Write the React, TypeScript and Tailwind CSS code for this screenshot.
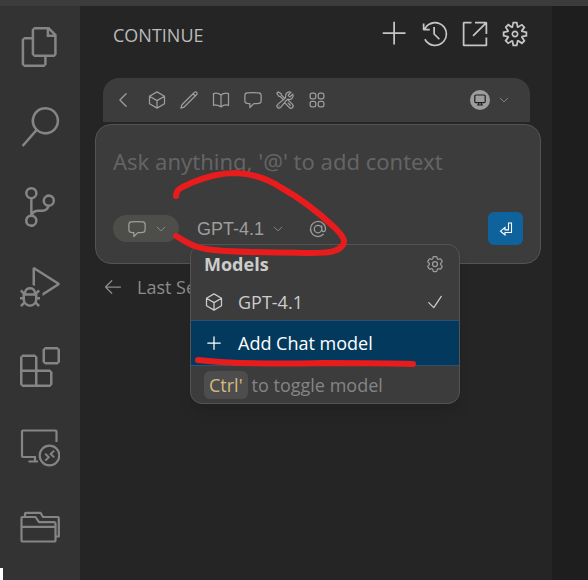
import type { ReactNode } from "react";
import {
  VscAdd,
  VscDebugAlt,
  VscGear,
  VscHistory,
  VscLinkExternal,
  VscSearch,
  VscSourceControl,
} from "react-icons/vsc";
import {
  HiOutlineArrowLeft,
  HiOutlineBookOpen,
  HiOutlineChatBubbleLeft,
  HiOutlineCheck,
  HiOutlineChevronDown,
  HiOutlineChevronLeft,
  HiOutlineCog6Tooth,
  HiOutlineCube,
  HiOutlinePencil,
  HiOutlinePlus,
  HiOutlineSquares2X2,
  HiOutlineWrenchScrewdriver,
} from "react-icons/hi2";

type IconProps = { className?: string };

function FilesIcon({ className }: IconProps) {
  return (
    <svg viewBox="0 0 24 24" className={className} fill="currentColor">
      <path d="M17.5 0h-9L7 1.5V6H2.5L1 7.5v15.07L2.5 24h12.07L16 22.57V18h4.7l1.3-1.43V4.5L17.5 0zm0 2.12l2.38 2.38H17.5V2.12zm-3 20.38h-12v-15H7v9.07L8.5 18h6v4.5zm6-6h-12v-15H16V6h4.5v10.5z" />
    </svg>
  );
}

function ExtensionsIcon({ className }: IconProps) {
  return (
    <svg viewBox="0 0 24 24" className={className} fill="currentColor" fillRule="evenodd">
      <path d="M13.5 1.5L15 0h7.5L24 1.5V9l-1.5 1.5H15L13.5 9V1.5zm1.5 0V9h7.5V1.5H15zM0 15V6l1.5-1.5H9L10.5 6v7.5H18l1.5 1.5v7.5L18 24H1.5L0 22.5V15zm9-1.5V6H1.5v7.5H9zM9 15H1.5v7.5H9V15zm1.5 7.5H18V15h-7.5v7.5z" />
    </svg>
  );
}

function RemoteExplorerIcon({ className }: IconProps) {
  return (
    <svg viewBox="0 0 40 40" className={className} fill="none" stroke="currentColor" strokeWidth="2.2">
      <path d="M36.5 15V4.5a1 1 0 0 0-1-1H3a1 1 0 0 0-1 1V29a1 1 0 0 0 1 1h13M8.5 34.5H18M15 30v4" />
      <circle cx="29.5" cy="28.5" r="9.8" />
      <path d="M25.2 26.8l3.6 3.4-3.6 3.4M34.2 23.6l-3.6 3.4 3.6 3.4" strokeWidth="1.9" />
    </svg>
  );
}

function FoldersIcon({ className }: IconProps) {
  return (
    <svg viewBox="0 0 40 40" className={className} fill="none" stroke="currentColor" strokeWidth="2.2" strokeLinejoin="round">
      <path d="M2.5 10h13l3.5 5.2h15a1.5 1.5 0 0 1 1.5 1.5V33a1.5 1.5 0 0 1-1.5 1.5H3A1.5 1.5 0 0 1 1.5 33V11a1 1 0 0 1 1-1ZM1.5 19.8h34" />
      <path d="M5 10V6.800a1 1 0 0 1 1-1h14.500l2.500 4.200H37.500a1.300 1.300 0 0 1 1.300 1.300V29.500h-3" />
    </svg>
  );
}

const activityItems = [
  { label: "Explorer", Icon: FilesIcon },
  { label: "Search", Icon: VscSearch },
  { label: "Source Control", Icon: VscSourceControl },
  { label: "Run and Debug", Icon: VscDebugAlt },
  { label: "Extensions", Icon: ExtensionsIcon },
  { label: "Remote Explorer", Icon: RemoteExplorerIcon },
  { label: "Project Manager", Icon: FoldersIcon },
];

const viewActions = [
  { label: "New Session", Icon: VscAdd },
  { label: "History", Icon: VscHistory },
  { label: "Open in Editor", Icon: VscLinkExternal },
  { label: "Settings", Icon: VscGear },
];

const lumpTools = [
  { label: "Models", Icon: HiOutlineCube },
  { label: "Rules", Icon: HiOutlinePencil },
  { label: "Docs", Icon: HiOutlineBookOpen },
  { label: "Prompts", Icon: HiOutlineChatBubbleLeft },
  { label: "Tools", Icon: HiOutlineWrenchScrewdriver },
  { label: "MCP", Icon: HiOutlineSquares2X2 },
];

function IconButton({ label, className = "", children }: { label: string; className?: string; children: ReactNode }) {
  return (
    <button type="button" aria-label={label} className={`flex shrink-0 items-center justify-center ${className}`}>
      {children}
    </button>
  );
}

function ActivityBar() {
  return (
    <nav className="relative flex w-20 shrink-0 flex-col bg-[#333333] pt-px text-[#858585]">
      {activityItems.map(({ label, Icon }) => (
        <IconButton key={label} label={label} className="h-20">
          <Icon className="size-10" />
        </IconButton>
      ))}
      <span className="absolute bottom-0 left-0 h-3 w-[3px] bg-white" />
    </nav>
  );
}

function Toolbar() {
  return (
    <div className="ml-2 mr-[11px] flex h-11 items-center rounded-t-2xl bg-[#3c3c3c] pl-2.5 pr-5 text-[#9d9d9d]">
      <IconButton label="Back" className="mr-3.5 size-5">
        <HiOutlineChevronLeft className="size-5" />
      </IconButton>
      <div className="flex flex-1 items-center gap-3">
        {lumpTools.map(({ label, Icon }) => (
          <IconButton key={label} label={label} className="size-5">
            <Icon className="size-5" />
          </IconButton>
        ))}
      </div>
      <button type="button" aria-label="Assistant" className="flex items-center gap-2">
        <span className="flex size-5 items-center justify-center rounded-full bg-[#9d9d9d] text-[#1e1e1e]">
          <svg viewBox="0 0 12 12" className="size-3" fill="none" stroke="currentColor" strokeWidth="1.2">
            <rect x="0.8" y="1" width="10.4" height="7.6" rx="1.2" />
            <path d="M4.6 8.6v2M7.4 8.6v2M3 11h6" />
          </svg>
        </span>
        <HiOutlineChevronDown className="size-3" />
      </button>
    </div>
  );
}

function ModelMenu() {
  return (
    <div className="absolute left-[95px] top-[120px] z-10 w-[270px] overflow-hidden rounded-xl border border-[#545454] bg-[#3c3c3c] text-lg text-[#cccccc] shadow-lg">
      <div className="flex h-[38px] items-center justify-between pl-[13px] pr-3.5">
        <h2 className="font-bold">Models</h2>
        <IconButton label="Configure models" className="size-5 text-[#9d9d9d]">
          <HiOutlineCog6Tooth className="size-5" />
        </IconButton>
      </div>
      <button type="button" className="flex h-[37px] w-full items-center gap-3.5 pl-[13px] pr-3.5">
        <HiOutlineCube className="size-5" />
        <span className="flex-1 text-left">GPT-4.1</span>
        <HiOutlineCheck className="size-5" />
      </button>
      <button
        type="button"
        className="flex h-[46px] w-full items-center gap-3.5 border-y border-[#2b5273] bg-[#04395e] px-[13px] text-white"
      >
        <HiOutlinePlus className="size-5" />
        Add Chat model
      </button>
      <div className="flex h-[37px] items-center gap-1 px-[13px] text-[#858585]">
        <kbd className="flex h-7 items-center rounded-md bg-[#4d4d4d] px-[5px] font-[inherit] text-[#d7ba7d]">Ctrl'</kbd>
        to toggle model
      </div>
    </div>
  );
}

function Annotations() {
  return (
    <svg
      className="pointer-events-none absolute left-0 top-0 z-20"
      width="588"
      height="580"
      fill="none"
      stroke="#e81c1c"
      strokeWidth="6"
      strokeLinecap="round"
      strokeLinejoin="round"
      aria-hidden="true"
    >
      <path d="M176 196C176 188 185 186 191 183C205 177 222 173 236 173C254 174 268 179 280 187C300 198 318 212 334 227C342 235 346 240 343 245C338 252 329 253 311 253C270 252 228 253 206 249C192 247 185 241 176 236" />
      <path d="M198 360C234 364 285 364 324 363C360 363 388 363 413 364" />
    </svg>
  );
}

function InputCard() {
  return (
    <div className="relative">
      <form className="flex h-[140px] flex-col rounded-2xl border border-[#545454] bg-[#3c3c3c] px-[17px] pb-[18px] pt-5">
        <textarea
          aria-label="Message"
          rows={1}
          placeholder="Ask anything, '@' to add context"
          className="h-8 w-full resize-none overflow-hidden whitespace-nowrap bg-transparent font-['Noto_Sans',sans-serif] text-[22px] leading-8 outline-none placeholder:text-[#646464]"
        />
        <div className="mt-auto flex items-center text-[#9d9d9d]">
          <button
            type="button"
            aria-label="Chat mode"
            className="flex h-[27px] items-center gap-2 rounded-full bg-[#4d4d4a] pl-3.5 pr-3"
          >
            <HiOutlineChatBubbleLeft className="size-5" />
            <HiOutlineChevronDown className="size-3" />
          </button>
          <button
            type="button"
            aria-haspopup="listbox"
            aria-expanded="true"
            className="ml-[18px] flex items-center gap-2 font-['Liberation_Sans',sans-serif] text-lg leading-6"
          >
            GPT-4.1
            <HiOutlineChevronDown className="size-3" />
          </button>
          <IconButton label="Add context" className="ml-6 size-5">
            <svg viewBox="0 0 24 24" className="size-5" fill="none" stroke="currentColor" strokeWidth="1.5" strokeLinecap="round">
              <path d="M16.5 12a4.5 4.5 0 1 1-9 0 4.5 4.5 0 0 1 9 0Zm0 0c0 1.66 1 3 2.25 3S21 13.66 21 12a9 9 0 1 0-2.64 6.36M16.5 12V8.25" />
            </svg>
          </IconButton>
          <button
            type="submit"
            aria-label="Send"
            className="ml-auto flex h-[33px] w-[35px] items-center justify-center rounded-md bg-[#0e639c] text-white"
          >
            <svg viewBox="0 0 14 14" className="size-3.5" fill="none" stroke="currentColor" strokeWidth="1.1">
              <path d="M9.5 1h3v9.5H6v2.500L1.500 9.200 6 5.500v2.400h3.500z" />
            </svg>
          </button>
        </div>
      </form>
      <ModelMenu />
    </div>
  );
}

export default function App() {
  return (
    <div className="relative flex min-h-screen flex-col overflow-hidden bg-[#1e1e1e] font-['Open_Sans','Noto_Sans',sans-serif]">
      <div className="h-1.5 bg-[#3c3c3c]" />
      <div className="flex flex-1">
        <ActivityBar />
        <main className="mr-9 min-w-0 flex-1 bg-[#252526] pl-[15px] pr-[11px]">
          <header className="flex h-[72px] items-start justify-between pl-[18px] pr-3 pt-3.5">
            <h1 className="text-lg leading-[30px] text-[#bbbbbb]">CONTINUE</h1>
            <div className="flex items-center gap-3 text-[#c5c5c5]">
              {viewActions.map(({ label, Icon }) => (
                <IconButton key={label} label={label} className="size-7">
                  <Icon className="size-7" />
                </IconButton>
              ))}
            </div>
          </header>
          <Toolbar />
          <div className="mt-0.5">
            <InputCard />
          </div>
          <button type="button" className="ml-2 mt-2 flex items-center gap-3.5 text-lg leading-[30px] text-[#8b8b8b]">
            <HiOutlineArrowLeft className="size-5" />
            Last Session
          </button>
        </main>
      </div>
      <Annotations />
    </div>
  );
}
